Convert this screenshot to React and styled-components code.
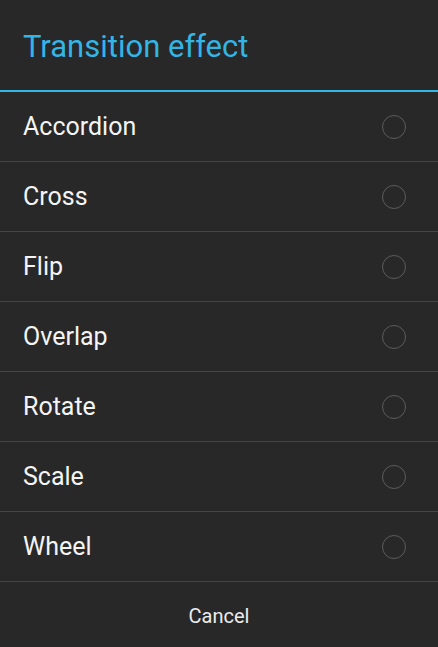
import React from 'react';
import styled, { createGlobalStyle } from 'styled-components';

const GlobalStyle = createGlobalStyle`
  html, body {
    margin: 0;
    padding: 0;
    background: #282828;
  }
  body {
    font-family: Roboto, "Liberation Sans", sans-serif;
  }
`;

const Dialog = styled.div`
  width: 438px;
  height: 647px;
  background: #282828;
  display: flex;
  flex-direction: column;
`;

const Header = styled.div`
  height: 92px;
  box-sizing: border-box;
  border-bottom: 2px solid #33b5e5;
  display: flex;
  align-items: center;
  padding: 2px 23px 0;
`;

const Title = styled.h1`
  margin: 0;
  font-size: 31px;
  font-weight: 400;
  color: #33b5e5;
`;

const List = styled.ul`
  list-style: none;
  margin: 0;
  padding: 0;
`;

const Row = styled.li`
  height: 70px;
  box-sizing: border-box;
  border-bottom: 1px solid #454545;
  display: flex;
  align-items: center;
  justify-content: space-between;
  padding: 0 32px 0 23px;
`;

const Label = styled.span`
  font-size: 25px;
  color: #f4f4f4;
`;

const Radio = styled.span`
  width: 22px;
  height: 22px;
  border-radius: 50%;
  border: 1.5px solid #5c5c5c;
`;

const Footer = styled.button`
  flex: 1;
  border: none;
  background: transparent;
  font-family: Roboto, "Liberation Sans", sans-serif;
  font-size: 20px;
  color: #ececec;
  padding: 2px 0 0;
`;

const effects = ['Accordion', 'Cross', 'Flip', 'Overlap', 'Rotate', 'Scale', 'Wheel'];

const App = () => {
  return (
    <Dialog>
      <GlobalStyle />
      <Header>
        <Title>Transition effect</Title>
      </Header>
      <List>
        {effects.map((name) => (
          <Row key={name}>
            <Label>{name}</Label>
            <Radio />
          </Row>
        ))}
      </List>
      <Footer>Cancel</Footer>
    </Dialog>
  );
};

export default App;
